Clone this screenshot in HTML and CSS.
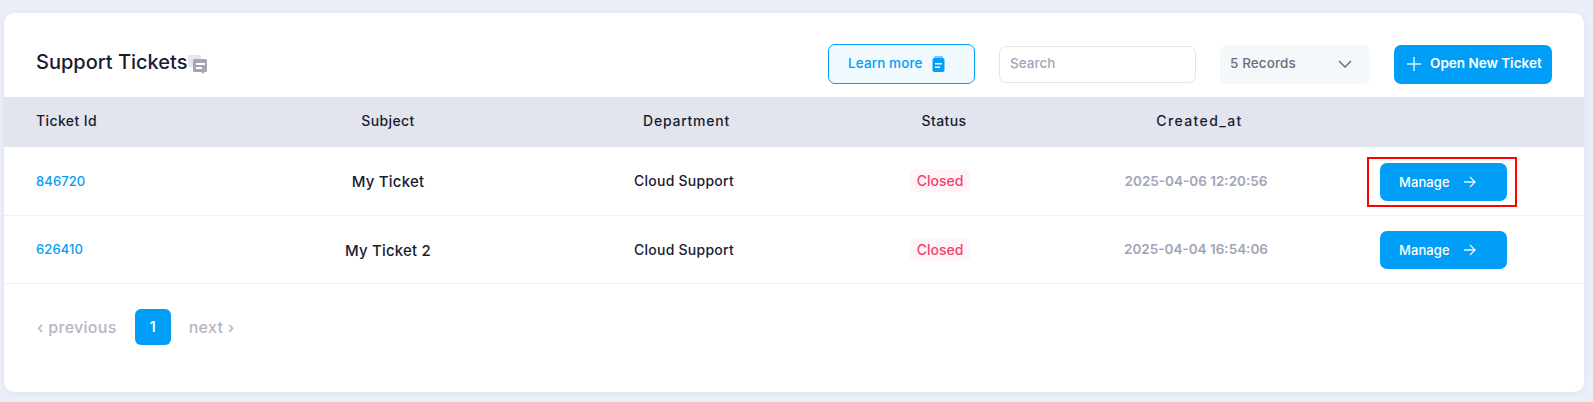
FILE: index.html
```html
<!DOCTYPE html>
<html>
<head>
    <title>Support Tickets</title>
    <link rel="stylesheet" href="styles.css">
</head>
<body>
    <div class="card">
        <header class="card-header">
            <h1 class="title">Support Tickets</h1>
            <svg class="title-icon" width="19" height="20" viewBox="0 0 19 20">
                <rect x="0" y="1" width="13" height="12" rx="1.5" fill="#e4e6ef"/>
                <path d="M6.5 5h11a1.5 1.5 0 0 1 1.5 1.500v10a1.500 1.500 0 0 1-1.500 1.500h-1.500v2l-3-2h-6.500a1.500 1.500 0 0 1-1.500-1.500v-10a1.500 1.500 0 0 1 1.500-1.500z" fill="#a1a5b7"/>
                <rect x="8" y="9" width="9" height="2" fill="#fff"/>
                <rect x="8" y="13" width="6" height="2" fill="#fff"/>
            </svg>
            <div class="tools">
                <a class="btn-learn" href="#"><span class="label">Learn more</span>
                    <svg width="13" height="16" viewBox="0 0 13 16">
                        <path d="M3 0h7a1 1 0 0 1 1 1v1H2V1a1 1 0 0 1 1-1z" fill="#7cc9fb"/>
                        <rect x="0.500" y="2" width="12" height="14" rx="2" fill="#009ef7"/>
                        <rect x="3" y="7" width="7" height="1.500" fill="#fff"/>
                        <rect x="3" y="10.500" width="5" height="1.500" fill="#fff"/>
                    </svg>
                </a>
                <input class="search" type="text" placeholder="Search">
                <div class="records">
                    <span class="label">5 Records</span>
                    <svg width="14" height="8" viewBox="0 0 14 8">
                        <path d="M1 1l6 6 6-6" fill="none" stroke="#6f6c80" stroke-width="1.500"/>
                    </svg>
                </div>
                <a class="btn-open" href="#">
                    <svg width="14" height="14" viewBox="0 0 14 14">
                        <path d="M7 0v14M0 7h14" stroke="#d5eefe" stroke-width="1.500"/>
                    </svg>
                    <span class="label">Open New Ticket</span>
                </a>
            </div>
        </header>

        <table class="tickets">
            <thead>
                <tr>
                    <th class="col-id">Ticket Id</th>
                    <th class="col-subject">Subject</th>
                    <th class="col-dept">Department</th>
                    <th class="col-status">Status</th>
                    <th class="col-date">Created_at</th>
                    <th class="col-action"></th>
                </tr>
            </thead>
            <tbody>
                <tr>
                    <td class="id-cell"><a class="ticket-id" href="#">846720</a></td>
                    <td class="subject">My Ticket</td>
                    <td class="dept">Cloud Support</td>
                    <td><span class="badge">Closed</span></td>
                    <td class="date">2025-04-06 12:20:56</td>
                    <td class="col-action">
                        <a class="btn-manage marked" href="#">Manage
                            <svg width="13" height="12" viewBox="0 0 12 12">
                                <path d="M0.500 6h10.500M6.500 1l5 5-5 5" fill="none" stroke="#e6f5fe" stroke-width="1.300"/>
                            </svg>
                        </a>
                    </td>
                </tr>
                <tr>
                    <td class="id-cell"><a class="ticket-id" href="#">626410</a></td>
                    <td class="subject">My Ticket 2</td>
                    <td class="dept">Cloud Support</td>
                    <td><span class="badge">Closed</span></td>
                    <td class="date">2025-04-04 16:54:06</td>
                    <td class="col-action">
                        <a class="btn-manage" href="#">Manage
                            <svg width="13" height="12" viewBox="0 0 12 12">
                                <path d="M0.500 6h10.500M6.500 1l5 5-5 5" fill="none" stroke="#e6f5fe" stroke-width="1.300"/>
                            </svg>
                        </a>
                    </td>
                </tr>
            </tbody>
        </table>

        <div class="pager">
            <span class="pager-link">&lsaquo; previous</span>
            <span class="pager-current">1</span>
            <span class="pager-link">next &rsaquo;</span>
        </div>
    </div>
</body>
</html>
```

FILE: styles.css
```css
* {
    box-sizing: border-box;
}

body {
    margin: 0;
    padding: 13px 9px 10px 4px;
    background-color: #eaeff8;
    font-family: Inter, "Liberation Sans", sans-serif;
    color: #181c32;
}

a {
    text-decoration: none;
}

.card {
    height: 379px;
    background-color: #fff;
    border-radius: 10px;
    box-shadow: 0 1px 6px rgba(76, 87, 125, 0.08);
}

.card-header {
    display: flex;
    align-items: center;
    height: 84px;
    padding: 18px 32px 0 32px;
}

.title {
    margin: 0 0 4px;
    font-size: 20px;
    font-weight: 500;
    letter-spacing: 0;
}

.title-icon {
    margin: 0;
}

.tools {
    display: flex;
    align-items: center;
    gap: 24px;
    margin-left: auto;
}

.label {
    padding-bottom: 2px;
}

.btn-learn {
    display: flex;
    align-items: center;
    gap: 9px;
    width: 147px;
    height: 40px;
    padding-left: 19px;
    background-color: #f1faff;
    border: 1px solid #009ef7;
    border-radius: 7px;
    color: #009ef7;
    font-size: 13.500px;
    font-weight: 500;
    letter-spacing: 0.100px;
}

.search {
    width: 197px;
    height: 37px;
    padding: 0 10px 2px;
    border: 1px solid #e4e6ef;
    border-radius: 7px;
    font-family: inherit;
    font-size: 13.500px;
}

.search::placeholder {
    color: #a1a5b7;
    font-weight: 500;
}

.records {
    display: flex;
    align-items: center;
    justify-content: space-between;
    width: 150px;
    height: 39px;
    padding: 0 18px 0 10px;
    background-color: #f5f8fa;
    border-radius: 7px;
    color: #6f6c80;
    font-size: 13.500px;
    font-weight: 500;
    letter-spacing: 0.100px;
}

.btn-open {
    display: flex;
    align-items: center;
    gap: 9px;
    width: 158px;
    height: 39px;
    padding-left: 13px;
    background-color: #009ef7;
    border-radius: 7px;
    color: #fff;
    font-size: 13.500px;
    font-weight: 600;
    white-space: nowrap;
}

.tickets {
    width: 100%;
    table-layout: fixed;
    border-collapse: collapse;
}

.tickets th {
    height: 50px;
    padding: 0 0 3px;
    background-color: #e2e5ee;
    font-size: 14px;
    font-weight: 500;
    letter-spacing: 0.400px;
}

.tickets td {
    height: 68px;
    padding: 0;
    border-bottom: 1px solid #eff2f5;
    text-align: center;
}

.tickets th.col-id,
.tickets td:first-child {
    padding-left: 32px;
    text-align: left;
}

.tickets td.id-cell {
    padding-bottom: 2px;
}

.col-id {
    width: 236px;
}

.col-subject {
    width: 296px;
}

.tickets .col-dept {
    width: 298px;
    padding-left: 3px;
    letter-spacing: 0.750px;
}

.col-status {
    width: 220px;
}

.tickets .col-date {
    width: 292px;
    padding-right: 1px;
    letter-spacing: 1.400px;
}

.tickets .col-action {
    padding-right: 43px;
    padding-top: 2px;
}

.ticket-id {
    color: #009ef7;
    font-size: 13px;
    font-weight: 500;
    letter-spacing: 0.100px;
}

.tickets .subject {
    padding-top: 2px;
    font-size: 15px;
    font-weight: 500;
    letter-spacing: 0.200px;
}

.tickets .dept {
    padding-right: 2px;
    font-size: 14px;
    font-weight: 500;
    letter-spacing: 0.250px;
}

.badge {
    display: inline-block;
    margin-right: 8px;
    padding: 3px 7px;
    background-color: #fff5f8;
    border-radius: 5px;
    color: #f1416c;
    font-size: 14px;
    font-weight: 500;
}

.tickets .date {
    padding-right: 8px;
    color: #a1a5b7;
    font-size: 13.500px;
    font-weight: 600;
}

.btn-manage {
    position: relative;
    display: inline-flex;
    align-items: center;
    gap: 13px;
    width: 127px;
    height: 38px;
    padding-left: 19px;
    background-color: #009ef7;
    border-radius: 7px;
    color: #fff;
    font-size: 13px;
    font-weight: 500;
    letter-spacing: 0.100px;
    vertical-align: middle;
}

/* red box drawn round the first button */
.marked::after {
    content: "";
    position: absolute;
    top: -6px;
    right: -10px;
    bottom: -6px;
    left: -13px;
    border: 2px solid #f00;
}

.pager {
    display: flex;
    align-items: center;
    gap: 18px;
    padding: 25px 0 0 33px;
}

.pager-link {
    color: #b5b5c3;
    font-size: 16px;
    font-weight: 500;
    letter-spacing: 0.300px;
}

.pager-current {
    display: flex;
    align-items: center;
    justify-content: center;
    width: 36px;
    height: 36px;
    background-color: #009ef7;
    border-radius: 6px;
    color: #fff;
    font-size: 14px;
    font-weight: 600;
}
```
